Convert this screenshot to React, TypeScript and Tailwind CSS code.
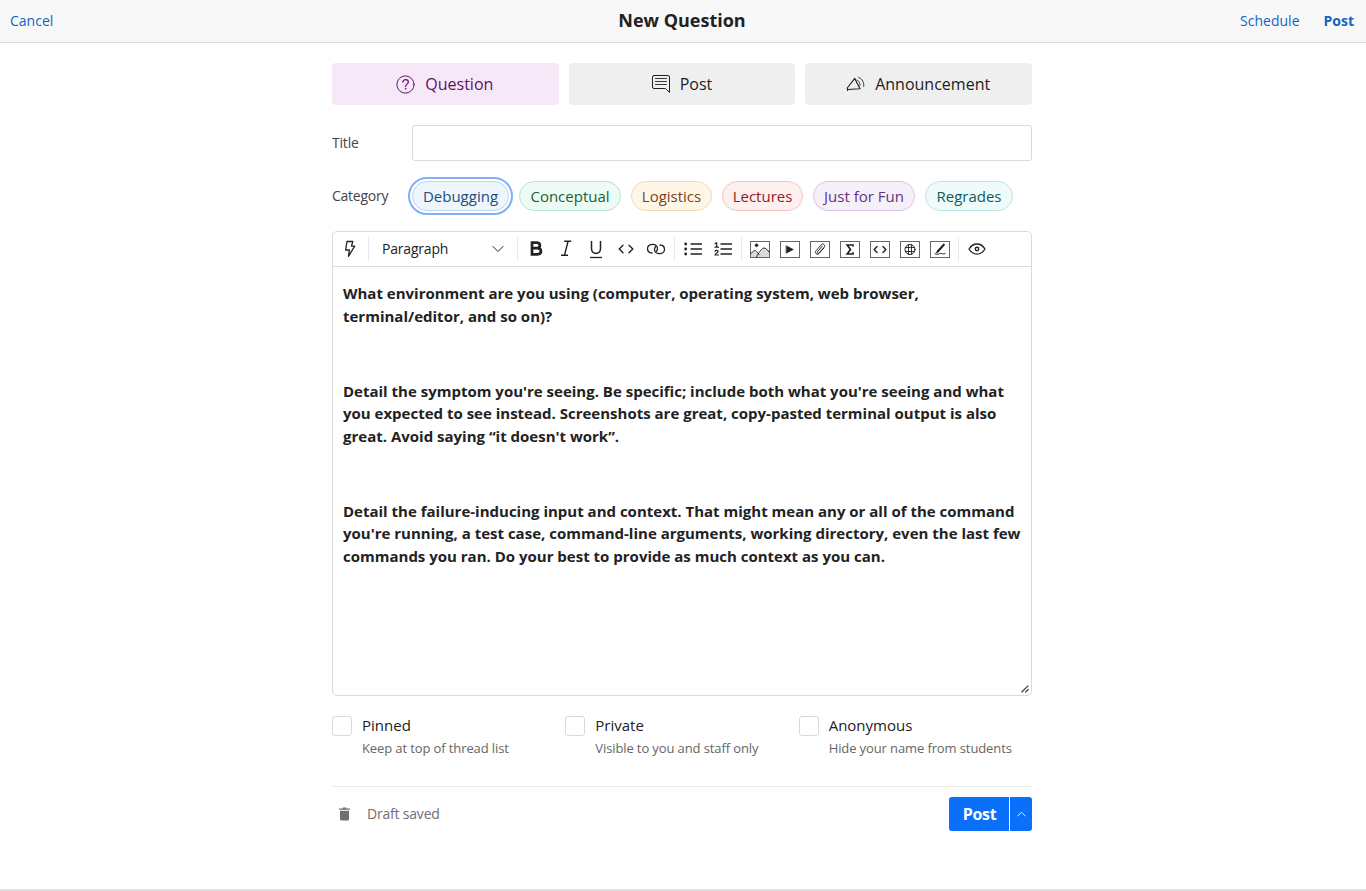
import React from "react";

type Children = { children?: React.ReactNode };

function Svg({ w, h, children, className }: { w: number; h: number; className?: string } & Children) {
  return (
    <svg
      width={w}
      height={h}
      viewBox={`0 0 ${w} ${h}`}
      fill="none"
      stroke="currentColor"
      strokeLinecap="round"
      strokeLinejoin="round"
      className={className}
    >
      {children}
    </svg>
  );
}

function Tool({ label, children }: { label: string } & Children) {
  return (
    <button aria-label={label} className="flex h-[34px] w-[30px] shrink-0 items-center justify-center">
      {children}
    </button>
  );
}

function Divider() {
  return <div className="mx-[3px] h-6 w-px shrink-0 bg-[#e8e8e8]" />;
}

/** Toolbar glyph enclosed in a thin 20x17 frame. */
function Framed({ children }: Children) {
  return (
    <Svg w={20} h={18}>
      <rect x="0.5" y="1.5" width="19" height="16" stroke="#666" strokeLinejoin="miter" />
      {children}
    </Svg>
  );
}

const categories = [
  { name: "Debugging", width: "w-[97px]", tone: "bg-[#edf5fd] border-[#bdd7ee] text-[#1f4e79] outline-2 outline-offset-2 outline-[#82aefb]" },
  { name: "Conceptual", width: "w-[102px]", tone: "bg-[#eefaf4] border-[#b9e4cd] text-[#14633a]" },
  { name: "Logistics", width: "w-[81px]", tone: "bg-[#fff6ea] border-[#f0d9b5] text-[#7d4310]" },
  { name: "Lectures", width: "w-[81px]", tone: "bg-[#fdf0ef] border-[#efc6c4] text-[#921d1b]" },
  { name: "Just for Fun", width: "w-[102px]", tone: "bg-[#f6f0fa] border-[#dac6e4] text-[#62347b]" },
  { name: "Regrades", width: "w-[88px]", tone: "bg-[#effbfa] border-[#bde6e3] text-[#0f5b57]" },
];

const options = [
  { name: "Pinned", hint: "Keep at top of thread list" },
  { name: "Private", hint: "Visible to you and staff only" },
  { name: "Anonymous", hint: "Hide your name from students" },
];

function Header() {
  return (
    <header className="grid h-[43px] grid-cols-3 items-center border-b border-[#dcdcdc] bg-[#f8f8f8] pr-3 pl-[10px] text-sm text-[#1264c0]">
      <button className="justify-self-start">Cancel</button>
      <h1 className="justify-self-center pb-[2px] text-lg leading-6 font-bold text-[#222]">New Question</h1>
      <div className="flex gap-6 justify-self-end">
        <button>Schedule</button>
        <button className="font-bold">Post</button>
      </div>
    </header>
  );
}

function TypePicker() {
  return (
    <div className="grid h-[42px] grid-cols-3 gap-[10px] text-base text-[#222]">
      <button className="flex items-center justify-center gap-[10px] rounded bg-[#f7e8f8] pr-px text-[#5c1166]">
        <Svg w={19} h={19}>
          <circle cx="9.5" cy="9.5" r="8.6" />
          <path d="M6.8 7.2C6.8 5.6 8 4.7 9.6 4.7S12.4 5.7 12.4 7.1C12.4 9 9.6 9.3 9.6 11.4" strokeWidth="1.2" />
          <circle cx="9.6" cy="13.8" r=".5" fill="currentColor" strokeWidth=".5" />
        </Svg>
        Question
      </button>
      <button className="flex items-center justify-center gap-[10px] rounded bg-[#efefef]">
        <Svg w={18} h={18}>
          <path d="M2 .5H16Q17.5.5 17.5 2V17.5L13.5 13.5H2Q.5 13.5.5 12V2Q.5.5 2 .5Z" />
          <path d="M3.5 3.5H14.5M3.5 6.5H14.5M3.5 9.5H14.5" strokeWidth=".9" />
        </Svg>
        Post
      </button>
      <button className="flex items-center justify-center gap-[10px] rounded bg-[#efefef] pr-px">
        <Svg w={19} h={16}>
          <path d="M1.2 12L8.8 2.4L14 12.7L1.6 13.5ZM1.6 13.5V14.4M11 7L8.8 2.4" strokeWidth="1.15" />
          <path d="M11 4C12.8 4.5 14.6 7.5 14 9.6" strokeWidth=".8" />
          <path d="M12.6 1.3C16.3 2.5 18.5 7 17.7 10.5" strokeWidth=".9" />
        </Svg>
        Announcement
      </button>
    </div>
  );
}

function Toolbar() {
  return (
    <div className="flex h-[35px] items-center border-b border-[#dadada] pl-[2px] text-[#222]">
      <Tool label="Quick actions">
        <Svg w={12} h={18}>
          <path d="M3 1.5H8.8L7.5 6.2H10.7L4.5 16.3L5.3 10H1.6Z" strokeWidth="1.3" />
        </Svg>
      </Tool>
      <Divider />
      <button className="flex h-[34px] w-[142px] items-center justify-between pr-[10px] pl-[10px] text-sm tracking-[-0.2px]">
        Paragraph
        <Svg w={12} h={8}>
          <path d="M1 1.5L6 6.5L11 1.5" />
        </Svg>
      </button>
      <Divider />
      <Tool label="Bold">
        <Svg w={14} h={18}>
          <path d="M3 2.7H7.5C12 2.7 12 8.1 7.5 8.1H3ZM3 8.1H8.2C13.2 8.1 13.2 14.3 8.2 14.3H3Z" strokeWidth="2.7" strokeLinejoin="miter" />
        </Svg>
      </Tool>
      <Tool label="Italic">
        <Svg w={12} h={18}>
          <path d="M4.2 1.3H11.2M1 15.3H8M8 1.5L4.5 15.1" strokeWidth="1.4" strokeLinecap="butt" />
        </Svg>
      </Tool>
      <Tool label="Underline">
        <Svg w={12} h={20}>
          <path d="M1.5 2V9.5C1.5 16 10.5 16 10.5 9.5V2" strokeWidth="1.5" strokeLinecap="butt" />
          <path d="M0 18.5H12" strokeWidth="1.3" strokeLinecap="butt" />
        </Svg>
      </Tool>
      <Tool label="Inline code">
        <Svg w={16} h={10}>
          <path d="M5 1.2L1.2 5L5 8.8M11 1.2L14.8 5L11 8.8" strokeWidth="1.4" />
        </Svg>
      </Tool>
      <Tool label="Link">
        <Svg w={20} h={12}>
          <path d="M6 10C3.3 9.9 1.5 8 1.5 5.6C1.5 3.1 3.7 1.4 6.5 1.4C9.3 1.4 11.5 3.1 11.5 5.6C11.5 6.8 11 7.8 10.2 8.5" strokeWidth="1.3" />
          <path d="M14 2C16.7 2.1 18.5 4 18.5 6.4C18.5 8.9 16.3 10.6 13.5 10.6C10.7 10.6 8.5 8.9 8.5 6.4C8.5 5.2 9 4.2 9.8 3.5" strokeWidth="1.3" />
        </Svg>
      </Tool>
      <Divider />
      <Tool label="Bulleted list">
        <Svg w={18} h={14}>
          <path d="M7 2H17.5M7 7H17.5M7 12H17.5" strokeWidth="1.3" />
          <path d="M1.7 2H1.71M1.7 7H1.71M1.7 12H1.71" strokeWidth="2.8" />
        </Svg>
      </Tool>
      <Tool label="Numbered list">
        <Svg w={18} h={16}>
          <path d="M7 3H17.5M7 8H17.5M7 13H17.5" strokeWidth="1.3" />
          <path d="M1 2.7L2.7 1.7V6M1 6.2H4.5M1 10.3C1.5 8.5 4.4 9.2 4 10.7C3.7 12 1 12.7 1 14H4.5" strokeWidth="1.2" />
        </Svg>
      </Tool>
      <Divider />
      <Tool label="Image">
        <Svg w={20} h={18}>
          <path d="M.5 14L4.5 10.5L8.5 15L15 7.5L19.5 11.5V17.5H.5Z" fill="#d8d8d8" stroke="none" />
          <rect x=".5" y="1.5" width="19" height="16" stroke="#666" strokeLinejoin="miter" />
          <path d="M1 13.5C3 11 5 9.5 6.5 11.5L9 14.5M6.5 17C9 12.5 11.5 8.5 14 8C16 8 18 10.5 19 12" />
          <circle cx="6.5" cy="5.3" r="1.3" fill="currentColor" />
        </Svg>
      </Tool>
      <Tool label="Video">
        <Framed><path d="M6.5 6L13.2 9.5L6.5 13Z" fill="currentColor" strokeWidth=".8" /></Framed>
      </Tool>
      <Tool label="File">
        <Framed>
          <path d="M13.8 8L9.2 13.3C7.2 15.6 4 13.1 6 10.8L11.4 4.7C13.2 2.9 15.9 5.2 14.2 7.2L9.1 13C7.7 14.3 6.5 12.8 7.6 11.6L12.1 6.4" strokeWidth=".95" />
        </Framed>
      </Tool>
      <Tool label="Math">
        <Framed><path d="M13 6.6V5H7.2L10.5 9.4L7.2 14H13V12.3" strokeWidth="1.7" strokeLinecap="butt" strokeLinejoin="miter" /></Framed>
      </Tool>
      <Tool label="Code block">
        <Framed><path d="M7 6.5L4.2 9.5L7 12.5M13 6.5L15.8 9.5L13 12.5" strokeWidth="1.4" /></Framed>
      </Tool>
      <Tool label="Web embed">
        <Framed>
          <circle cx="10" cy="9.5" r="5" />
          <path d="M5.5 7.5H14.5M5.5 11.5H14.5M8.5 4.8V14.2M11.5 4.8V14.2" strokeWidth=".9" />
        </Framed>
      </Tool>
      <Tool label="Drawing">
        <Framed>
          <path d="M13.8 4.7L8.2 11" strokeWidth="2.1" />
          <path d="M7.6 10.6L6.3 13L8.7 11.7" fill="currentColor" strokeWidth=".8" />
          <path d="M5 13.8C8 15.5 9 13.4 10.7 13.4S12.8 14.6 15 13.6" />
        </Framed>
      </Tool>
      <Divider />
      <Tool label="Preview">
        <Svg w={18} h={12}>
          <path d="M1 6C5 -.7 13 -.7 17 6C13 12.7 5 12.7 1 6Z" strokeWidth="1.3" />
          <circle cx="9" cy="6" r="1.7" strokeWidth="1.4" />
        </Svg>
      </Tool>
    </div>
  );
}

function Editor() {
  return (
    <section className="relative mt-5 h-[465px] rounded-[5px] border border-[#dadada]">
      <Toolbar />
      <div className="flex flex-col gap-[52.5px] px-[10px] pt-[15px] text-[15px] leading-[22.5px] font-bold text-[#222]">
        <p>
          What environment are you using (computer, operating system, web browser,
          <br />
          terminal/editor, and so on)?
        </p>
        <p>
          Detail the symptom you're seeing. Be specific; include both what you're seeing and what
          <br />
          you expected to see instead. Screenshots are great, copy-pasted terminal output is also
          <br />
          great. Avoid saying “it doesn't work”.
        </p>
        <p>
          Detail the failure-inducing input and context. That might mean any or all of the command
          <br />
          you're running, a test case, command-line arguments, working directory, even the last few
          <br />
          commands you ran. Do your best to provide as much context as you can.
        </p>
      </div>
      <Svg w={8} h={8} className="absolute right-[2px] bottom-[2px] text-[#333]">
        <path d="M.8 7L7 .8M4.5 7.2L7.2 4.5" strokeWidth="1.1" />
      </Svg>
    </section>
  );
}

export default function App() {
  return (
    <div className="flex h-[891px] flex-col overflow-hidden border-b-2 border-[#e0e1e1] bg-white font-['Open_Sans',sans-serif]">
      <Header />
      <main className="mx-auto w-[702px] pt-5 pr-[2px]">
        <TypePicker />
        <div className="mt-5 flex h-9 items-center text-sm text-[#444]">
          <label htmlFor="title" className="w-20 tracking-[-0.2px]">Title</label>
          <input id="title" className="h-9 flex-1 rounded-[3px] border border-[#dadada] px-2" />
        </div>
        <div className="mt-5 flex h-[30px] items-center text-sm text-[#444]">
          <span className="w-20 tracking-[-0.25px]">Category</span>
          <div className="flex gap-[10px]">
            {categories.map((c) => (
              <button
                key={c.name}
                className={`flex h-[30px] items-center justify-center rounded-full border pt-[2px] text-[15px] whitespace-nowrap ${c.width} ${c.tone}`}
              >
                {c.name}
              </button>
            ))}
          </div>
        </div>
        <Editor />
        <div className="mt-[18px] grid grid-cols-3">
          {options.map((o) => (
            <label key={o.name} className="flex gap-[10px]">
              <span className="mt-[2px] h-5 w-5 shrink-0 rounded-[3px] border border-[#dadada]" />
              <span className="flex flex-col">
                <span className="mb-[2px] text-[15px] leading-[22px] text-[#222]">{o.name}</span>
                <span className="text-[13px] leading-[21px] tracking-[-0.11px] whitespace-nowrap text-[#666]">{o.hint}</span>
              </span>
            </label>
          ))}
        </div>
        <footer className="mt-[27px] flex items-center border-t border-[#ebebeb] pt-[10px]">
          <Svg w={11} h={14} className="ml-[7px] text-[#707070]">
            <path d="M0 1.5H3.5L4 .5H7L7.5 1.5H11V2.7H0ZM1 3.8H10V12.2Q10 13.5 8.7 13.5H2.3Q1 13.5 1 12.2Z" fill="currentColor" stroke="none" />
          </Svg>
          <span className="ml-[17px] text-sm tracking-[-0.2px] text-[#707070]">Draft saved</span>
          <div className="ml-auto flex h-[34px] gap-px overflow-hidden rounded-[3px] text-white">
            <button className="w-[60px] bg-[#0a6ff9] pl-px text-base font-bold tracking-[-0.3px]">Post</button>
            <button aria-label="More post options" className="flex w-[22px] items-center justify-center bg-[#0a6ff9]">
              <Svg w={9} h={6}>
                <path d="M.8 5L4.5 1.2L8.2 5" strokeWidth=".9" />
              </Svg>
            </button>
          </div>
        </footer>
      </main>
    </div>
  );
}
